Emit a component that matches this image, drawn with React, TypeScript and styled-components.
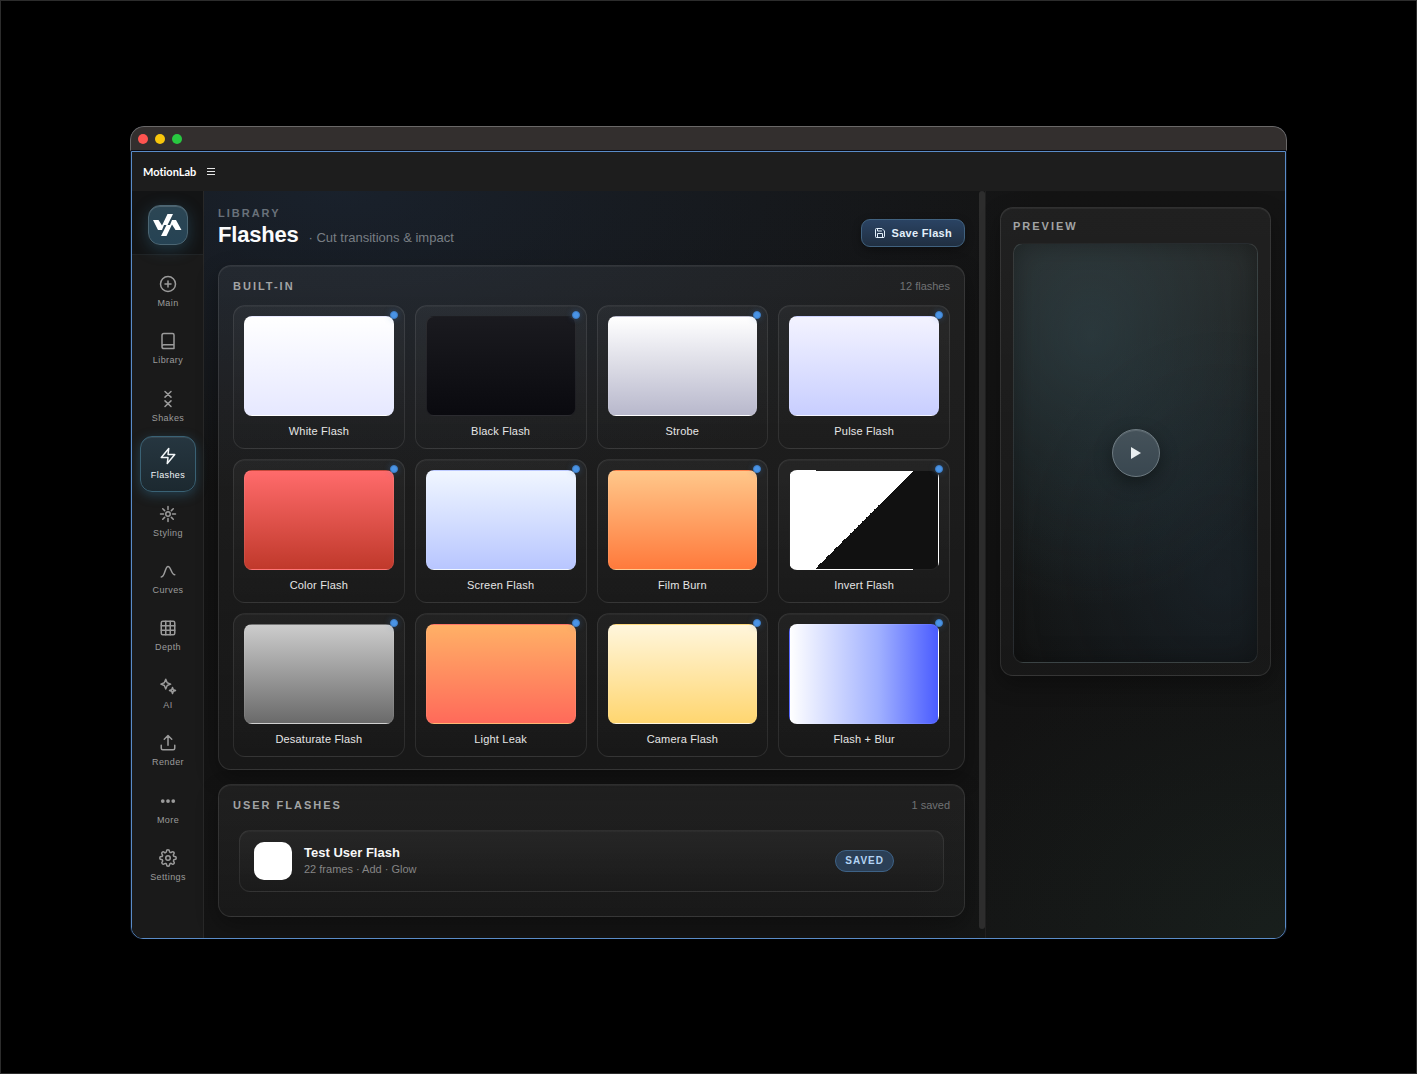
import React from "react";
import styled, { createGlobalStyle, css } from "styled-components";

const sans = `"Liberation Sans", Arial, Helvetica, sans-serif`;

const GlobalStyle = createGlobalStyle`
  *, *::before, *::after { box-sizing: border-box; }
  body { margin: 0; background: #000; font-family: ${sans}; }
  button { font: inherit; color: inherit; cursor: pointer; }
  h1, h2, p, ul { margin: 0; padding: 0; }
`;

const Desktop = styled.div`
  display: flex;
  min-height: 100vh;
  padding: 125px 129px 134px;
  border: 1px solid #2c2c2c;
  background: #000;
`;

const Window = styled.div`
  flex: 1;
  display: flex;
  flex-direction: column;
  min-width: 0;
  border-radius: 14px 14px 12px 12px;
  background: #0d1420;
  overflow: hidden;
`;

const TitleBar = styled.div`
  display: flex;
  align-items: center;
  gap: 7px;
  height: 25px;
  padding: 1px 7px 0;
  border: 1px solid #6a6868;
  border-bottom: 1px solid #0a0a12;
  border-radius: 14px 14px 0 0;
  background: #332f2e;
`;

const Light = styled.span<{ $color: string }>`
  width: 10px;
  height: 10px;
  border-radius: 50%;
  background: ${(p) => p.$color};
`;

const AppFrame = styled.div`
  flex: 1;
  display: flex;
  flex-direction: column;
  margin: 0 1px;
  border: 1px solid #5a8cc8;
  border-radius: 0 0 12px 12px;
  background: #171717;
  overflow: hidden;
`;

const AppBar = styled.header`
  display: flex;
  align-items: center;
  gap: 10px;
  height: 39px;
  padding: 0 11px;
  background: #1d1d1d;
`;

const AppName = styled.span`
  font: 700 11px/16px Lato, "Open Sans", sans-serif;
  font-variant-ligatures: none;
  color: #fff;
`;

const MenuButton = styled.button`
  display: flex;
  padding: 0;
  border: 0;
  background: none;
  color: #e6e6e6;
`;

const Body = styled.div`
  flex: 1;
  display: flex;
  background:
    radial-gradient(ellipse 700px 300px at 18% 0, rgba(34, 54, 82, 0.38), rgba(34, 54, 82, 0.2) 45%, transparent 100%),
    radial-gradient(ellipse 380px 300px at 100% 100%, rgba(34, 56, 48, 0.3), rgba(34, 56, 48, 0.14) 50%, transparent 100%),
    linear-gradient(180deg, #141414, #121212 50%, #141414);
`;

const Sidebar = styled.aside`
  display: flex;
  flex-direction: column;
  width: 72px;
  border-right: 1px solid #282828;
  background: #1a1a1a;
`;

const Brand = styled.div`
  display: flex;
  justify-content: center;
  height: 64px;
  padding-top: 14px;
  border-bottom: 1px solid #202325;
  background: #131415;
`;

const Logo = styled.div`
  display: grid;
  place-items: center;
  width: 40px;
  height: 40px;
  border: 1px solid #4c6673;
  border-radius: 12px;
  background: linear-gradient(180deg, #2c4654, #264354);
  box-shadow: 0 4px 16px rgba(52, 110, 140, 0.4), inset 0 1px 0 rgba(255, 255, 255, 0.16);
`;

const Nav = styled.nav`
  flex: 1;
  display: flex;
  flex-direction: column;
  justify-content: space-between;
  padding: 9px 7px 44px 8px;
`;

const NavButton = styled.button<{ $active?: boolean }>`
  display: flex;
  flex-direction: column;
  align-items: center;
  gap: 3px;
  height: 56px;
  padding: 10px 0 0;
  border: 1px solid transparent;
  border-radius: 12px;
  background: none;
  color: #9b9b9b;
  font-size: 9px;
  line-height: 14px;
  letter-spacing: 0.4px;
  ${(p) =>
    p.$active &&
    css`
      border-color: #3a6275;
      background: linear-gradient(180deg, #263640, #1c2930);
      box-shadow: 0 3px 12px rgba(50, 115, 150, 0.42), inset 0 1px 0 rgba(255, 255, 255, 0.08);
      color: #f2f6f8;
    `}
`;

const Main = styled.main`
  flex: 1;
  display: flex;
  flex-direction: column;
  gap: 14px;
  min-width: 0;
  padding: 14px 14px 21px;
`;

const PageTop = styled.div`
  display: flex;
  align-items: flex-start;
  justify-content: space-between;
  height: 46px;
`;

const Eyebrow = styled.p<{ $dim?: boolean }>`
  font-size: 11px;
  line-height: 16px;
  font-weight: 700;
  letter-spacing: 2px;
  color: ${(p) => (p.$dim ? "#69717a" : "#a2a4a5")};
`;

const TitleLine = styled.div`
  display: flex;
  align-items: baseline;
  gap: 10px;
`;

const Title = styled.h1`
  font-size: 22px;
  line-height: 28px;
  font-weight: 700;
  letter-spacing: -0.2px;
  color: #fafbfc;
`;

const Subtitle = styled.p`
  font-size: 13px;
  line-height: 18px;
  color: #787e84;
`;

const SaveButton = styled.button`
  display: flex;
  align-items: center;
  gap: 6px;
  height: 28px;
  margin-top: 14px;
  padding: 0 12px;
  border: 1px solid #41627f;
  border-radius: 9px;
  background: linear-gradient(180deg, #2a4363, #202f41);
  box-shadow: 0 3px 8px rgba(0, 0, 0, 0.35);
  font-size: 11px;
  line-height: 16px;
  font-weight: 700;
  letter-spacing: 0.3px;
  color: #e2effa;
`;

const Panel = styled.section`
  border: 1px solid rgba(255, 255, 255, 0.1);
  border-radius: 13px;
  background: linear-gradient(180deg, rgba(255, 255, 255, 0.055), rgba(255, 255, 255, 0.025));
  box-shadow: 0 8px 22px rgba(0, 0, 0, 0.3), inset 0 1px 0 rgba(255, 255, 255, 0.05);
`;

const LibraryPanel = styled(Panel)`
  padding: 12px 14px;
`;

const PanelHeader = styled.div`
  display: flex;
  align-items: center;
  justify-content: space-between;
  height: 16px;
  margin-bottom: 11px;
`;

const Count = styled.span`
  font-size: 11px;
  line-height: 16px;
  color: #707274;
`;

const Grid = styled.div`
  display: grid;
  grid-template-columns: repeat(4, minmax(0, 1fr));
  gap: 10px;
`;

const Card = styled.button`
  position: relative;
  display: flex;
  flex-direction: column;
  gap: 7px;
  height: 144px;
  padding: 10px 10px 9px;
  border: 1px solid rgba(255, 255, 255, 0.09);
  border-radius: 12px;
  background: linear-gradient(180deg, rgba(255, 255, 255, 0.04), rgba(255, 255, 255, 0.005));
  box-shadow: inset 0 1px 0 rgba(255, 255, 255, 0.04);
  font-size: 11px;
  line-height: 16px;
  letter-spacing: 0.2px;
  text-align: center;
  color: #e6e6e6;
`;

const Swatch = styled.span<{ $fill: string }>`
  display: block;
  flex: none;
  width: 100%;
  height: 100px;
  border: 1px solid rgba(255, 255, 255, 0.08);
  border-radius: 8px;
  background: ${(p) => p.$fill};
`;

const CardLabel = styled.span`
  width: 100%;
`;

const Dot = styled.i`
  position: absolute;
  top: 5px;
  right: 6px;
  width: 8px;
  height: 8px;
  border: 1px solid #3d7cc4;
  border-radius: 50%;
  background: #4a94e6;
  box-shadow: 0 0 6px rgba(60, 130, 210, 0.35);
`;

const UserPanel = styled(Panel)`
  padding: 12px 14px 24px;
`;

const UserList = styled.ul`
  margin: 17px 6px 0;
  list-style: none;
`;

const UserRow = styled.li`
  display: flex;
  align-items: center;
  gap: 12px;
  height: 62px;
  padding: 0 49px 0 14px;
  border: 1px solid rgba(255, 255, 255, 0.08);
  border-radius: 11px;
  background: linear-gradient(180deg, rgba(255, 255, 255, 0.04), rgba(255, 255, 255, 0.005));
  box-shadow: inset 0 1px 0 rgba(255, 255, 255, 0.03);
`;

const UserSwatch = styled.span`
  width: 38px;
  height: 38px;
  border-radius: 10px;
  background: #fff;
`;

const UserText = styled.div`
  flex: 1;
`;

const UserName = styled.p`
  font-size: 13px;
  line-height: 16px;
  font-weight: 700;
  color: #f8f8f8;
`;

const UserMeta = styled.p`
  font-size: 11px;
  line-height: 16px;
  color: #858585;
`;

const Badge = styled.span`
  height: 22px;
  padding: 0 9px;
  border: 1px solid #3e6286;
  border-radius: 11px;
  background: #2b3f56;
  font-size: 10px;
  line-height: 20px;
  font-weight: 700;
  letter-spacing: 1px;
  color: #b4d4f4;
`;

const ScrollTrack = styled.div`
  width: 7px;
  padding-bottom: 9px;
  border-right: 1px solid #202020;
`;

const ScrollThumb = styled.div`
  width: 6px;
  height: 100%;
  border-radius: 3px;
  background: #2d2d2d;
`;

const PreviewColumn = styled.aside`
  width: 299px;
  padding: 16px 14px;
`;

const PreviewPanel = styled(Panel)`
  display: flex;
  flex-direction: column;
  gap: 9px;
  padding: 10px 12px 12px;
`;

const Stage = styled.div`
  display: grid;
  place-items: center;
  height: 420px;
  border: 1px solid rgba(255, 255, 255, 0.08);
  border-radius: 10px;
  background:
    radial-gradient(ellipse 220px 270px at 32% 22%, rgba(60, 98, 112, 0.32), rgba(60, 98, 112, 0.16) 50%, transparent 100%),
    radial-gradient(ellipse 210px 260px at 85% 80%, rgba(36, 60, 80, 0.26), rgba(36, 60, 80, 0.13) 50%, transparent 100%),
    linear-gradient(180deg, #272928, #191c1c 50%, #121313);
  box-shadow: inset 0 0 24px rgba(0, 0, 0, 0.3);
`;

const PlayButton = styled.button`
  display: grid;
  place-items: center;
  width: 48px;
  height: 48px;
  padding: 0;
  border: 1px solid #6d7a81;
  border-radius: 50%;
  background: linear-gradient(180deg, #45525a, #394750);
  box-shadow: 0 6px 18px rgba(0, 0, 0, 0.4), inset 0 1px 0 rgba(255, 255, 255, 0.12);
  color: #e9eef0;
`;

const Glyph = ({ size = 18, children }: { size?: number; children: React.ReactNode }) => (
  <svg
    width={size}
    height={size}
    viewBox="0 0 24 24"
    fill="none"
    stroke="currentColor"
    strokeWidth="2"
    strokeLinecap="round"
    strokeLinejoin="round"
    aria-hidden="true"
  >
    {children}
  </svg>
);

const navItems: { label: string; icon: React.ReactNode }[] = [
  { label: "Main", icon: <><circle cx="12" cy="12" r="10" /><path d="M8 12h8M12 8v8" /></> },
  {
    label: "Library",
    icon: <path d="M4 19.5v-15A2.5 2.5 0 0 1 6.500 2H18a2 2 0 0 1 2 2v18H6.500a2.500 2.500 0 0 1 0-5H20" />,
  },
  {
    label: "Shakes",
    icon: <path d="M8 2l8 7.500M16 2l-8 7.500M8 14.500l8 7.500M16 14.500l-8 7.500" />,
  },
  { label: "Flashes", icon: <path d="M13 2 3 14h9l-1 8 10-12h-9l1-8z" /> },
  {
    label: "Styling",
    icon: (
      <>
        <circle cx="12" cy="12" r="3" />
        <path d="M12 2v4M12 18v4M2 12h4M18 12h4M5 5l2.500 2.500M16.500 16.500 19 19M5 19l2.500-2.500M16.500 7.500 19 5" />
      </>
    ),
  },
  { label: "Curves", icon: <path d="M3 20c5 0 5-14 9-14s4.500 11 9 11" /> },
  {
    label: "Depth",
    icon: (
      <>
        <rect x="3" y="3" width="18" height="18" rx="2" />
        <path d="M3 9h18M3 15h18M9 3v18M15 3v18" />
      </>
    ),
  },
  {
    label: "AI",
    icon: (
      <>
        <path d="M9 3l1.900 4.600L15.500 9.500l-4.600 1.900L9 16l-1.900-4.600L2.500 9.500l4.600-1.900z" />
        <path d="M18 14l1.100 2.900L22 18l-2.900 1.100L18 22l-1.100-2.900L14 18l2.900-1.100z" />
      </>
    ),
  },
  {
    label: "Render",
    icon: <path d="M21 15v4a2 2 0 0 1-2 2H5a2 2 0 0 1-2-2v-4M17 7l-5-5-5 5M12 2v13" />,
  },
  {
    label: "More",
    icon: (
      <g fill="currentColor" stroke="none">
        <circle cx="5" cy="12" r="2.500" />
        <circle cx="12" cy="12" r="2.500" />
        <circle cx="19" cy="12" r="2.500" />
      </g>
    ),
  },
  {
    label: "Settings",
    icon: (
      <>
        <circle cx="12" cy="12" r="3" />
        <path d="M19.400 15a1.650 1.650 0 0 0 .33 1.820l.06.06a2 2 0 1 1-2.830 2.830l-.06-.06a1.650 1.650 0 0 0-2.800 1.170V21a2 2 0 0 1-4 0v-.09A1.650 1.650 0 0 0 7.300 19.700l-.06.06a2 2 0 1 1-2.830-2.830l.06-.06A1.650 1.650 0 0 0 3.300 14.100H3a2 2 0 0 1 0-4h.09A1.650 1.650 0 0 0 4.300 7.300l-.06-.06a2 2 0 1 1 2.830-2.830l.06.06A1.650 1.650 0 0 0 9.900 3.300V3a2 2 0 0 1 4 0v.09a1.650 1.650 0 0 0 2.800 1.170l.06-.06a2 2 0 1 1 2.830 2.830l-.06.06a1.650 1.650 0 0 0 1.170 2.800H21a2 2 0 0 1 0 4h-.09A1.650 1.650 0 0 0 19.400 15z" />
      </>
    ),
  },
];

const flashes: { name: string; fill: string }[] = [
  { name: "White Flash", fill: "linear-gradient(180deg, #ffffff, #e6e8ff)" },
  { name: "Black Flash", fill: "linear-gradient(180deg, #1a1a1f, #0a0a0f)" },
  { name: "Strobe", fill: "linear-gradient(180deg, #ffffff, #b8b8cc)" },
  { name: "Pulse Flash", fill: "linear-gradient(180deg, #f3f3ff, #c8ceff)" },
  { name: "Color Flash", fill: "linear-gradient(180deg, #ff6b6b, #c0392b)" },
  { name: "Screen Flash", fill: "linear-gradient(180deg, #f0f6ff, #b8c6ff)" },
  { name: "Film Burn", fill: "linear-gradient(180deg, #ffc78a, #ff7a3c)" },
  { name: "Invert Flash", fill: "linear-gradient(135deg, #ffffff 50%, #111111 50%)" },
  { name: "Desaturate Flash", fill: "linear-gradient(180deg, #cccccc, #6a6a6a)" },
  { name: "Light Leak", fill: "linear-gradient(180deg, #ffb066, #ff6a5a)" },
  { name: "Camera Flash", fill: "linear-gradient(180deg, #fff6dc, #ffd670)" },
  { name: "Flash + Blur", fill: "linear-gradient(90deg, #ffffff, #a0b0ff 60%, #4a5cff)" },
];

export default function App() {
  return (
    <>
      <GlobalStyle />
      <Desktop>
        <Window>
          <TitleBar>
            <Light $color="#ff5450" />
            <Light $color="#f8c60c" />
            <Light $color="#28c840" />
          </TitleBar>
          <AppFrame>
            <AppBar>
              <AppName>MotionLab</AppName>
              <MenuButton aria-label="Menu">
                <svg width="10" height="9" viewBox="0 0 10 9" aria-hidden="true">
                  <path d="M1 1.500h8M1 4.500h8M1 7.500h8" stroke="currentColor" />
                </svg>
              </MenuButton>
            </AppBar>
            <Body>
              <Sidebar>
                <Brand>
                  <Logo>
                    <svg width="30" height="24" viewBox="0.5 -1 30 24" fill="#fff" aria-hidden="true">
                      <path d="M0.500 6h5.500l3.500 5.500L15 0h5.500L15 11h-3.500l-2 5h-4z" />
                      <path d="M29 16h-6l-3.500-5.500L14 22H8.500L14 11h3.500l2-5h4z" />
                    </svg>
                  </Logo>
                </Brand>
                <Nav aria-label="Sections">
                  {navItems.map((item) => (
                    <NavButton
                      key={item.label}
                      $active={item.label === "Flashes"}
                      aria-current={item.label === "Flashes" ? "page" : undefined}
                    >
                      <Glyph>{item.icon}</Glyph>
                      {item.label}
                    </NavButton>
                  ))}
                </Nav>
              </Sidebar>
              <Main>
                <PageTop>
                  <div>
                    <Eyebrow $dim>LIBRARY</Eyebrow>
                    <TitleLine>
                      <Title>Flashes</Title>
                      <Subtitle>· Cut transitions &amp; impact</Subtitle>
                    </TitleLine>
                  </div>
                  <SaveButton>
                    <Glyph size={12}>
                      <path d="M19 21H5a2 2 0 0 1-2-2V5a2 2 0 0 1 2-2h11l5 5v11a2 2 0 0 1-2 2z" />
                      <path d="M17 21v-8H7v8M7 3v5h8" />
                    </Glyph>
                    Save Flash
                  </SaveButton>
                </PageTop>
                <LibraryPanel>
                  <PanelHeader>
                    <Eyebrow as="h2">BUILT-IN</Eyebrow>
                    <Count>12 flashes</Count>
                  </PanelHeader>
                  <Grid>
                    {flashes.map((flash) => (
                      <Card key={flash.name}>
                        <Swatch $fill={flash.fill} />
                        <CardLabel>{flash.name}</CardLabel>
                        <Dot />
                      </Card>
                    ))}
                  </Grid>
                </LibraryPanel>
                <UserPanel>
                  <PanelHeader>
                    <Eyebrow as="h2">USER FLASHES</Eyebrow>
                    <Count>1 saved</Count>
                  </PanelHeader>
                  <UserList>
                    <UserRow>
                      <UserSwatch />
                      <UserText>
                        <UserName>Test User Flash</UserName>
                        <UserMeta>22 frames · Add · Glow</UserMeta>
                      </UserText>
                      <Badge>SAVED</Badge>
                    </UserRow>
                  </UserList>
                </UserPanel>
              </Main>
              <ScrollTrack>
                <ScrollThumb />
              </ScrollTrack>
              <PreviewColumn>
                <PreviewPanel>
                  <Eyebrow as="h2">PREVIEW</Eyebrow>
                  <Stage>
                    <PlayButton aria-label="Play preview">
                      <svg width="12" height="12" viewBox="0 0 12 12" aria-hidden="true">
                        <path d="M1 0v12l10-6z" fill="currentColor" />
                      </svg>
                    </PlayButton>
                  </Stage>
                </PreviewPanel>
              </PreviewColumn>
            </Body>
          </AppFrame>
        </Window>
      </Desktop>
    </>
  );
}
